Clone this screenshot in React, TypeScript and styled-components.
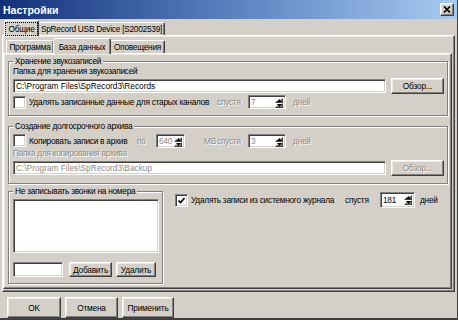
import React from 'react';
import styled, { createGlobalStyle, css } from 'styled-components';

const FONT = `"Liberation Sans", Arial, sans-serif`;

const Global = createGlobalStyle`
  html, body { margin: 0; padding: 0; background: #d4d0c8; }
  body { font-family: ${FONT}; font-size: 8.3px; letter-spacing: -0.25px; color: #000; }
  * { box-sizing: border-box; }
`;

const sunken = css`
  border: 1px solid;
  border-color: #808080 #ffffff #ffffff #808080;
  box-shadow: inset 1px 1px 0 #404040, inset -1px -1px 0 #d4d0c8;
`;

const raised = css`
  border: 1px solid;
  border-color: #ffffff #404040 #404040 #ffffff;
  box-shadow: inset -1px -1px 0 #808080, inset 1px 1px 0 #ecebe6;
`;

const disabledText = css`
  color: #8d8a84;
  text-shadow: 1px 1px 0 #ffffff;
`;

const Window = styled.div`
  width: 458px;
  height: 320px;
  display: flex;
  flex-direction: column;
  background: #d4d0c8;
  border-right: 1px solid #404040;
  border-bottom: 2px solid #404040;
  overflow: hidden;
`;

const TitleBar = styled.div`
  height: 19px;
  flex: none;
  display: flex;
  align-items: center;
  justify-content: space-between;
  padding: 0 3px 0 3px;
  background: linear-gradient(90deg, #12307a 0%, #5a80c0 50%, #a6caf0 100%);
  color: #ffffff;
  font: bold 10.5px ${FONT};
  letter-spacing: 0;
`;

const CloseBtn = styled.div`
  width: 14px;
  height: 13px;
  background: #d4d0c8;
  ${raised};
  display: flex;
  align-items: center;
  justify-content: center;
`;

const Body = styled.div`
  flex: 1;
  display: flex;
  flex-direction: column;
  padding: 1px 2px 0 2px;
`;

const TabStrip = styled.div<{ $h: number; $pl: number }>`
  height: ${(p) => p.$h}px;
  flex: none;
  display: flex;
  align-items: flex-end;
  padding-left: ${(p) => p.$pl}px;
`;

const Tab = styled.div<{ $w: number; $active?: boolean }>`
  width: ${(p) => p.$w}px;
  height: ${(p) => (p.$active ? 16 : 13)}px;
  display: flex;
  align-items: center;
  justify-content: center;
  background: #d4d0c8;
  border: 1px solid;
  border-bottom: none;
  border-color: #ffffff #404040 transparent #ffffff;
  border-radius: 2px 2px 0 0;
  box-shadow: inset -1px 0 0 #808080;
  white-space: nowrap;
  position: relative;
  ${(p) =>
    p.$active &&
    css`
      margin: 0 -1px -1px -1px;
      z-index: 1;
    `}
`;

const Focus = styled.span`
  outline: 1px dotted #000;
  outline-offset: 1px;
  padding: 0 1px;
`;

const OuterPanel = styled.div`
  height: 257px;
  flex: none;
  display: flex;
  flex-direction: column;
  ${raised};
  padding: 1px 2px 2px 0;
`;

const InnerPanel = styled.div`
  flex: 1;
  display: flex;
  flex-direction: column;
  ${raised};
  padding: 2px 3px 0 4px;
`;

const Group = styled.fieldset<{ $mt?: number; $pb: number; $w?: number }>`
  margin: ${(p) => p.$mt ?? 0}px 0 0 0;
  padding: 0 3px ${(p) => p.$pb}px 4px;
  min-width: 0;
  ${(p) => (p.$w ? `width: ${p.$w}px; flex: none;` : '')}
  border: 1px solid #808080;
  box-shadow: inset 1px 1px 0 #ffffff, 1px 1px 0 #ffffff;
  display: flex;
  flex-direction: column;
`;

const Legend = styled.legend`
  padding: 0 2px;
  line-height: 10px;
  background: #d4d0c8;
`;

const Label = styled.div<{ $disabled?: boolean; $mt?: number }>`
  line-height: 10px;
  height: 10px;
  margin-top: ${(p) => p.$mt ?? 0}px;
  white-space: nowrap;
  ${(p) => p.$disabled && disabledText}
`;

const Row = styled.div<{ $mt?: number; $h: number; $gap?: number }>`
  display: flex;
  align-items: center;
  height: ${(p) => p.$h}px;
  margin-top: ${(p) => p.$mt ?? 0}px;
  gap: ${(p) => p.$gap ?? 0}px;
`;

const Cell = styled.span<{ $w?: number; $disabled?: boolean; $ml?: number }>`
  ${(p) => (p.$w ? `width: ${p.$w}px;` : '')}
  flex: none;
  margin-left: ${(p) => p.$ml ?? 0}px;
  white-space: nowrap;
  display: flex;
  align-items: center;
  gap: 3px;
  ${(p) => p.$disabled && disabledText}
`;

const Field = styled.div<{ $w?: number; $h: number; $disabled?: boolean }>`
  ${(p) => (p.$w ? `width: ${p.$w}px; flex: none;` : 'flex: 1;')}
  height: ${(p) => p.$h}px;
  background: #ffffff;
  ${sunken};
  display: flex;
  align-items: center;
  padding-left: 2px;
  white-space: nowrap;
  overflow: hidden;
  letter-spacing: 0;
  ${(p) => p.$disabled && `color: #8d8a84;`}
`;

const Btn = styled.button<{ $w: number; $h: number; $disabled?: boolean; $ml?: number }>`
  width: ${(p) => p.$w}px;
  height: ${(p) => p.$h}px;
  flex: none;
  padding: 0;
  margin: 0 0 0 ${(p) => p.$ml ?? 0}px;
  background: #d4d0c8;
  ${raised};
  border-radius: 0;
  font: 8.3px ${FONT};
  letter-spacing: -0.2px;
  color: #000;
  ${(p) => p.$disabled && disabledText}
`;

const Box = styled.span`
  width: 13px;
  height: 13px;
  flex: none;
  background: #ffffff;
  ${sunken};
  display: flex;
  align-items: center;
  justify-content: center;
`;

const Spin = styled.div<{ $w: number; $h: number }>`
  width: ${(p) => p.$w}px;
  height: ${(p) => p.$h}px;
  flex: none;
  background: #ffffff;
  ${sunken};
  display: flex;
  align-items: stretch;
  padding: 2px 2px 2px 2px;
`;

const SpinValue = styled.span<{ $disabled?: boolean }>`
  flex: 1;
  display: flex;
  align-items: center;
  ${(p) => p.$disabled && `color: #8d8a84;`}
`;

const SpinArrows = styled.span`
  width: 8px;
  display: flex;
  flex-direction: column;
`;

const SpinArrow = styled.span`
  flex: 1;
  background: #d4d0c8;
  ${raised};
  display: flex;
  align-items: center;
  justify-content: center;
`;

const ListBox = styled.div`
  height: 54px;
  margin-top: 3px;
  background: #ffffff;
  ${sunken};
`;

const Split = styled.div`
  display: flex;
  align-items: flex-start;
  margin-top: 2px;
`;

const Footer = styled.div`
  display: flex;
  gap: 4px;
  padding: 5px 0 0 5px;
`;

const Arrow = ({ up }: { up?: boolean }) => (
  <svg width="5" height="3" viewBox="0 0 5 3">
    <path d={up ? 'M0 3 L2.5 0 L5 3 Z' : 'M0 0 L2.5 3 L5 0 Z'} fill="#000" />
  </svg>
);

const Spinner = ({ w, h, value, disabled }: { w: number; h: number; value: string; disabled?: boolean }) => (
  <Spin $w={w} $h={h}>
    <SpinValue $disabled={disabled}>{value}</SpinValue>
    <SpinArrows>
      <SpinArrow>
        <Arrow up />
      </SpinArrow>
      <SpinArrow>
        <Arrow />
      </SpinArrow>
    </SpinArrows>
  </Spin>
);

const CheckBox = ({ checked }: { checked?: boolean }) => (
  <Box>
    {checked && (
      <svg width="7" height="7" viewBox="0 0 7 7">
        <path d="M0.5 3.5 L2.5 5.5 L6.5 1" stroke="#000" strokeWidth="1.6" fill="none" />
      </svg>
    )}
  </Box>
);

export default function App() {
  return (
    <>
      <Global />
      <Window>
        <TitleBar>
          <span>Настройки</span>
          <CloseBtn>
            <svg width="8" height="7" viewBox="0 0 8 7">
              <path d="M1 0.5 L7 6.5 M7 0.5 L1 6.5" stroke="#000" strokeWidth="1.7" />
            </svg>
          </CloseBtn>
        </TitleBar>
        <Body>
          <TabStrip $h={15} $pl={3}>
            <Tab $w={35} $active>
              <Focus>Общие</Focus>
            </Tab>
            <Tab $w={127}>SpRecord USB Device [S2002539]</Tab>
          </TabStrip>
          <OuterPanel>
            <TabStrip $h={16} $pl={3}>
              <Tab $w={48}>Программа</Tab>
              <Tab $w={58} $active>
                База данных
              </Tab>
              <Tab $w={55}>Оповещения</Tab>
            </TabStrip>
            <InnerPanel>
              <Group $pb={6}>
                <Legend>Хранение звукозаписей</Legend>
                <Label>Папка для хранения звукозаписей</Label>
                <Row $mt={2} $h={16} $gap={5}>
                  <Field $h={14}>C:\Program Files\SpRecord3\Records</Field>
                  <Btn $w={53} $h={16}>
                    Обзор...
                  </Btn>
                </Row>
                <Row $mt={1} $h={14}>
                  <Cell $w={204}>
                    <CheckBox />
                    Удалять записанные данные для старых каналов
                  </Cell>
                  <Cell $w={31} $disabled>
                    спустя
                  </Cell>
                  <Spinner w={38} h={14} value="7" disabled />
                  <Cell $ml={7} $disabled>
                    дней
                  </Cell>
                </Row>
              </Group>

              <Group $mt={5} $pb={7}>
                <Legend>Создание долгосрочного архива</Legend>
                <Row $mt={2} $h={15}>
                  <Cell $w={124}>
                    <CheckBox />
                    Копировать записи в архив
                  </Cell>
                  <Cell $w={19} $disabled>
                    по
                  </Cell>
                  <Spinner w={29} h={14} value="640" disabled />
                  <Cell $w={13} $ml={19} $disabled>
                    MB
                  </Cell>
                  <Cell $w={31} $disabled>
                    спустя
                  </Cell>
                  <Spinner w={38} h={14} value="3" disabled />
                  <Cell $ml={7} $disabled>
                    дней
                  </Cell>
                </Row>
                <Label $disabled>Папка для копирования архива</Label>
                <Row $mt={2} $h={16} $gap={5}>
                  <Field $h={14} $disabled>
                    C:\Program Files\SpRecord3\Backup
                  </Field>
                  <Btn $w={53} $h={16} $disabled>
                    Обзор...
                  </Btn>
                </Row>
              </Group>

              <Split>
                <Group $w={155} $pb={6}>
                  <Legend>Не записывать звонки на номера</Legend>
                  <ListBox />
                  <Row $mt={9} $h={15}>
                    <Field $w={50} $h={15} />
                    <Btn $w={43} $h={15} $ml={6}>
                      Добавить
                    </Btn>
                    <Btn $w={40} $h={15} $ml={4}>
                      Удалить
                    </Btn>
                  </Row>
                </Group>
                <Row $mt={6} $h={16}>
                  <Cell $w={170} $ml={12}>
                    <CheckBox checked />
                    Удалять записи из системного журнала
                  </Cell>
                  <Cell $w={35}>спустя</Cell>
                  <Spinner w={35} h={16} value="181" />
                  <Cell $ml={5}>дней</Cell>
                </Row>
              </Split>
            </InnerPanel>
          </OuterPanel>
          <Footer>
            <Btn $w={54} $h={21}>
              OK
            </Btn>
            <Btn $w={53} $h={21}>
              Отмена
            </Btn>
            <Btn $w={52} $h={21}>
              Применить
            </Btn>
          </Footer>
        </Body>
      </Window>
    </>
  );
}
